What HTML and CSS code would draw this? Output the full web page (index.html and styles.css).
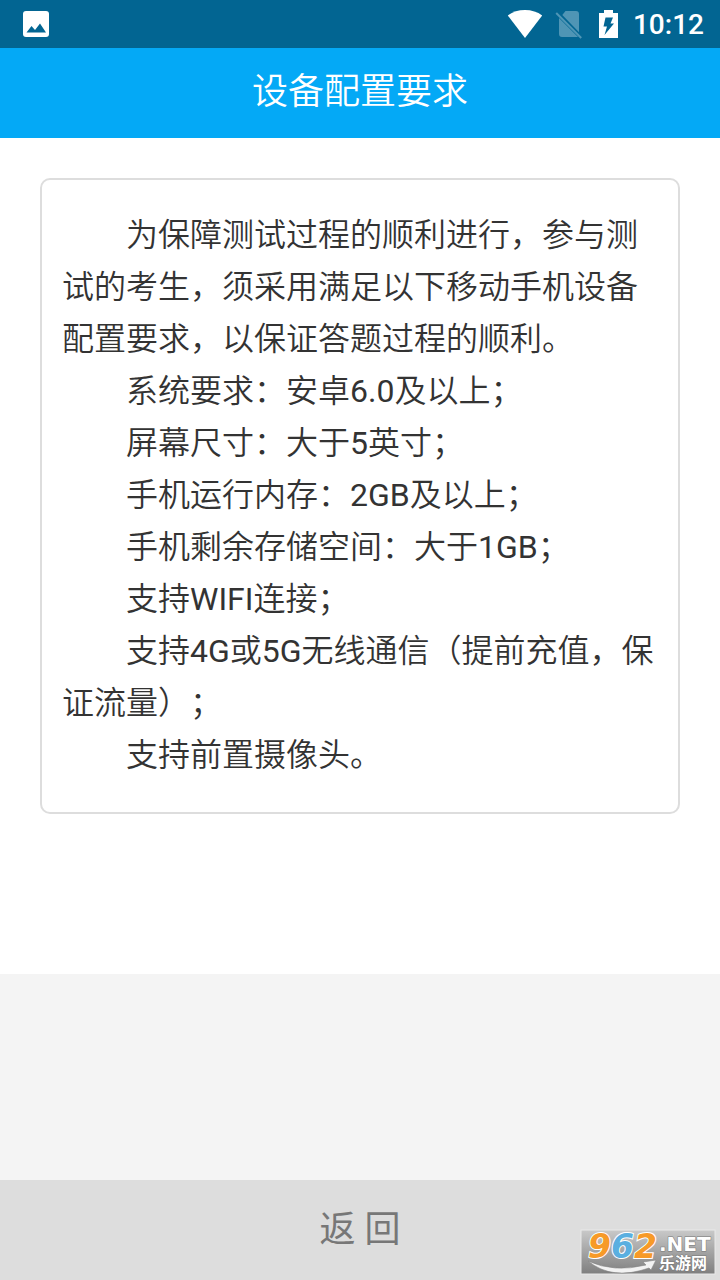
FILE: index.html
```html
<!DOCTYPE html>
<html lang="zh-CN">
<head>
<meta charset="utf-8">
<meta name="viewport" content="width=device-width, initial-scale=1">
<title>设备配置要求</title>
<link rel="stylesheet" href="styles.css">
</head>
<body>
<div class="app">
  <div class="status-bar">
    <svg class="status-photo" width="26" height="26" viewBox="0 0 26 26" aria-hidden="true">
      <rect width="26" height="26" rx="3" fill="#fff"/>
      <path d="M3.500 21.500 8.500 15l3.500 4 5-6.500 6 9z" fill="#026592"/>
    </svg>
    <div class="status-icons">
      <svg width="36" height="30" viewBox="0 0 36 30" aria-hidden="true">
        <path d="M.8 6.500Q8 1 18 1t17.200 5.500L18 29z" fill="#fff"/>
      </svg>
      <svg class="status-sim" width="28" height="30" viewBox="0 0 28 30" aria-hidden="true">
        <path d="M10.500 2H21q3 0 3 3v18.200L7.300 6zM4 9 23 28H7q-3 0-3-3z" fill="#4f95b5"/>
        <path d="M1.200 4 26.200 29" stroke="#4f95b5" stroke-width="2"/>
      </svg>
      <svg width="20" height="30" viewBox="0 0 20 30" aria-hidden="true">
        <path d="M5 1h9v3h5v25H0V4h5z" fill="#fff"/>
        <path d="M6.500 8.500h7.500l-2.500 6H15L5.500 26l2.500-8.500H4.500z" fill="#026592"/>
      </svg>
    </div>
    <time class="clock">10:12</time>
  </div>
  <header class="title-bar">
    <h1 class="title">设备配置要求</h1>
  </header>
  <main class="content">
    <section class="card">
      <p>为保障测试过程的顺利进行，参与测试的考生，须采用满足以下移动手机设备配置要求，以保证答题过程的顺利。</p>
      <p>系统要求：安卓<span class="latin">6.0</span>及以上；</p>
      <p>屏幕尺寸：大于<span class="latin">5</span>英寸；</p>
      <p>手机运行内存：<span class="latin">2GB</span>及以上；</p>
      <p>手机剩余存储空间：大于<span class="latin">1GB</span>；</p>
      <p>支持<span class="latin">WIFI</span>连接；</p>
      <p>支持<span class="latin">4G</span>或<span class="latin">5G</span>无线通信（提前充值，保证流量）；</p>
      <p>支持前置摄像头。</p>
    </section>
  </main>
  <button class="back" type="button">返 回</button>
  <svg class="watermark" width="136" height="46" viewBox="0 0 136 46" role="img" aria-label="962.NET 乐游网">
    <defs>
      <linearGradient id="plate" x1="0" y1="0" x2="0" y2="1">
        <stop offset="0" stop-color="#c9c9c9"/>
        <stop offset="1" stop-color="#7f7f7f"/>
      </linearGradient>
    </defs>
    <rect x="1" y="1" width="134" height="44" fill="url(#plate)" stroke="#e9e9e9"/>
    <path d="M8 32Q34 44 66 36l-3-3 13-2-5 10-2-2Q32 52 8 32z" fill="#f2f2f2" stroke="#858585" stroke-width=".6"/>
    <text class="wm-number" x="8" y="29"><tspan fill="#f79a28">9</tspan><tspan fill="#5aafe0">6</tspan><tspan fill="#f79a28">2</tspan></text>
    <text class="wm-net" x="79" y="22">.NET</text>
    <text class="wm-name" x="79" y="40">乐游网</text>
  </svg>
</div>
</body>
</html>
```
FILE: styles.css
```css
* {
  box-sizing: border-box;
}

body {
  margin: 0;
  background: #f4f4f4;
  color: #333;
  font-family: Roboto, "Noto Sans CJK SC", sans-serif;
  font-weight: 350;
  text-spacing-trim: space-all;
}

.app {
  position: relative;
  display: flex;
  flex-direction: column;
  min-height: 100vh;
}

.status-bar {
  display: flex;
  align-items: center;
  height: 48px;
  padding: 0 16px 0 23px;
  background: #026592;
  color: #fff;
}

.status-icons {
  display: flex;
  gap: 12px;
  margin-left: auto;
}

.status-sim {
  margin-right: 4px;
}

.clock {
  margin-left: 14px;
  padding-top: 2px;
  font-size: 28px;
  font-weight: 500;
  line-height: 46px;
}

.title-bar {
  padding: 17px 20px 19px;
  background: #04a9f6;
  color: #fff;
  text-align: center;
}

.title {
  margin: 0;
  font-size: 36px;
  font-weight: 350;
  line-height: 54px;
}

.content {
  padding: 40px 40px 160px;
  background: #fff;
}

.card {
  padding: 29px 20px 31px;
  border: 2px solid #ddd;
  border-radius: 10px;
  font-size: 32px;
  line-height: 52px;
}

.card p {
  margin: 0;
  text-indent: 2em;
}

.latin {
  font-weight: 400;
}

.back {
  height: 100px;
  margin-top: auto;
  padding: 0 0 8px;
  border: 0;
  background: #ddd;
  color: #777;
  font-family: inherit;
  font-size: 36px;
}

.watermark {
  position: absolute;
  right: 4px;
  bottom: 5px;
  overflow: visible;
}

.wm-number {
  font: italic bold 33px "DejaVu Sans", sans-serif;
  stroke: #fff;
  stroke-width: 2px;
  paint-order: stroke;
}

.wm-net {
  fill: #fff;
  font: bold 20px "DejaVu Sans", sans-serif;
  stroke: #777;
  stroke-width: 1px;
  paint-order: stroke;
}

.wm-name {
  fill: #fff;
  font: bold 16px "Noto Sans CJK SC", sans-serif;
  stroke: #777;
  stroke-width: 1px;
  paint-order: stroke;
}
```
